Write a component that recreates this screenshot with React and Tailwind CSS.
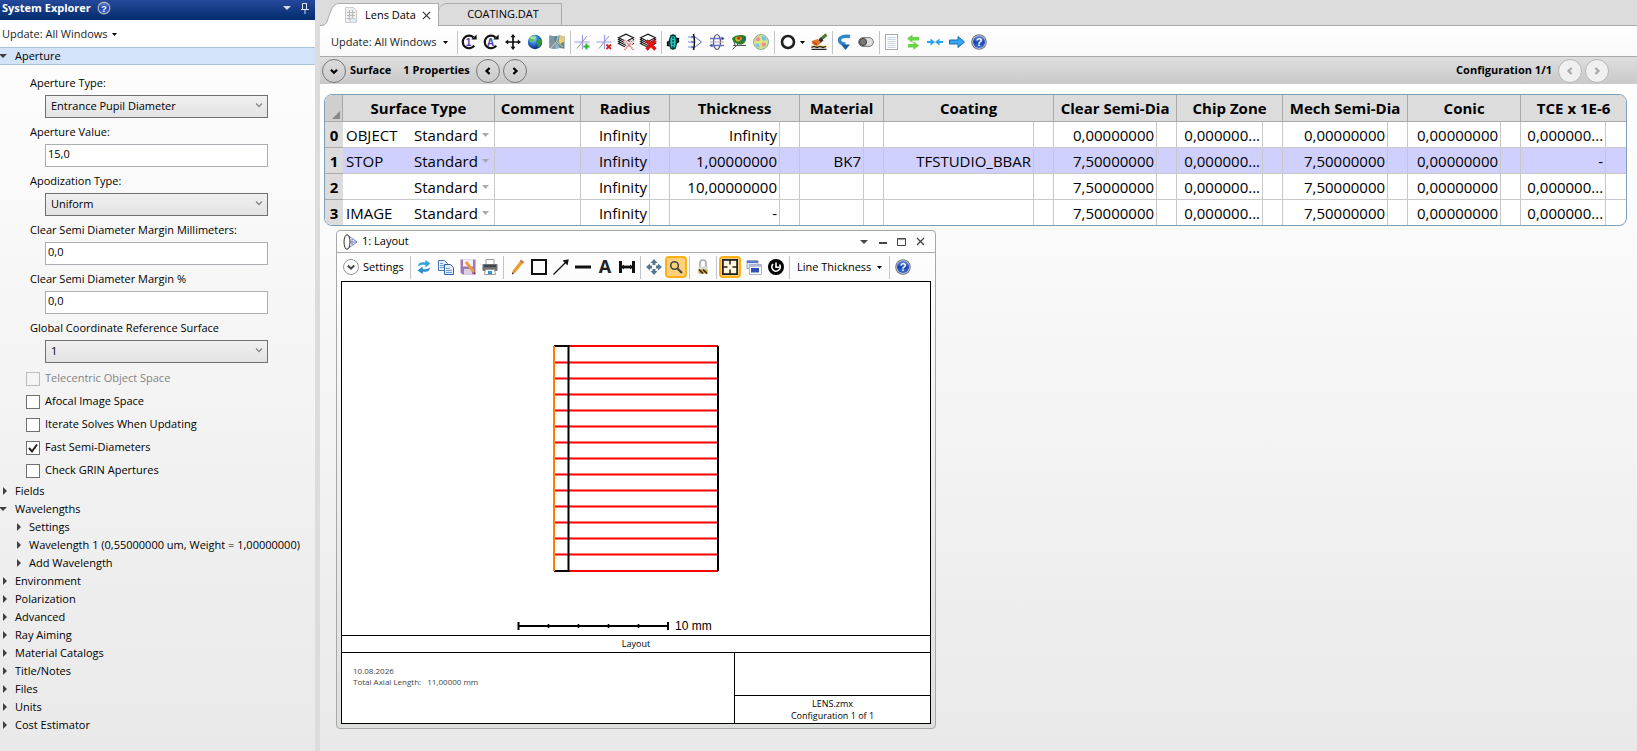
import React, { useState } from 'react';

const surfaces = [
  {
    label: 'OBJECT',
    cells: ['Infinity', 'Infinity', '', '', '0,00000000', '0,000000...', '0,00000000', '0,00000000', '0,000000...'],
  },
  {
    label: 'STOP',
    cells: ['Infinity', '1,00000000', 'BK7', 'TFSTUDIO_BBAR', '7,50000000', '0,000000...', '7,50000000', '0,00000000', '-'],
  },
  {
    label: '',
    cells: ['Infinity', '10,00000000', '', '', '7,50000000', '0,000000...', '7,50000000', '0,00000000', '0,000000...'],
  },
  {
    label: 'IMAGE',
    cells: ['Infinity', '-', '', '', '7,50000000', '0,000000...', '7,50000000', '0,00000000', '0,000000...'],
  },
];

// value column + solve column for every parameter
const columns = [
  { title: 'Radius', width: 'w-[69px]' },
  { title: 'Thickness', width: 'w-[110px]' },
  { title: 'Material', width: 'w-[64px]' },
  { title: 'Coating', width: 'w-[150px]' },
  { title: 'Clear Semi-Dia', width: 'w-[103px]' },
  { title: 'Chip Zone', width: 'w-[86px]' },
  { title: 'Mech Semi-Dia', width: 'w-[105px]' },
  { title: 'Conic', width: 'w-[93px]' },
  { title: 'TCE x 1E-6', width: 'w-[85px]' },
];

const fields = [
  { id: 'apertureType', label: 'Aperture Type:', type: 'select', value: 'Entrance Pupil Diameter' },
  { id: 'apertureValue', label: 'Aperture Value:', type: 'text', value: '15,0' },
  { id: 'apodization', label: 'Apodization Type:', type: 'select', value: 'Uniform' },
  { id: 'marginMm', label: 'Clear Semi Diameter Margin Millimeters:', type: 'text', value: '0,0' },
  { id: 'marginPct', label: 'Clear Semi Diameter Margin %', type: 'text', value: '0,0' },
  { id: 'globalRef', label: 'Global Coordinate Reference Surface', type: 'select', value: '1' },
];

const options = [
  { id: 'telecentric', label: 'Telecentric Object Space', disabled: true },
  { id: 'afocal', label: 'Afocal Image Space' },
  { id: 'iterate', label: 'Iterate Solves When Updating' },
  { id: 'fast', label: 'Fast Semi-Diameters', checked: true },
  { id: 'grin', label: 'Check GRIN Apertures' },
];

const tree = [
  { label: 'Fields' },
  { label: 'Wavelengths', open: true },
  { label: 'Settings', child: true },
  { label: 'Wavelength 1 (0,55000000 um, Weight = 1,00000000)', child: true },
  { label: 'Add Wavelength', child: true },
  { label: 'Environment' },
  { label: 'Polarization' },
  { label: 'Advanced' },
  { label: 'Ray Aiming' },
  { label: 'Material Catalogs' },
  { label: 'Title/Notes' },
  { label: 'Files' },
  { label: 'Units' },
  { label: 'Cost Estimator' },
];

const Icon = ({ children, className = 'w-4 h-4' }) => (
  <svg viewBox="0 0 16 16" className={`${className} shrink-0 overflow-visible`} fill="none">
    {children}
  </svg>
);

const CaretDown = ({ className = 'w-[5px] h-[3px] text-black' }) => (
  <svg viewBox="0 0 8 4" className={`${className} shrink-0`} preserveAspectRatio="none">
    <path d="M0 0h8L4 4z" fill="currentColor" />
  </svg>
);

const HelpIcon = ({ className }) => (
  <Icon className={className}>
    <defs>
      <linearGradient id="helpFill" x1="0" y1="0" x2="0" y2="1">
        <stop offset="0" stopColor="#5f86dd" />
        <stop offset="0.5" stopColor="#1c44ad" />
        <stop offset="1" stopColor="#3d6fd8" />
      </linearGradient>
    </defs>
    <circle cx="8" cy="8" r="7.8" fill="#6f7683" />
    <circle cx="8" cy="8" r="6.8" fill="#c3c9d6" />
    <circle cx="8" cy="8" r="6" fill="url(#helpFill)" />
    <text x="8" y="12" textAnchor="middle" fontSize="11" fontWeight="bold" fill="#fff" fontFamily="Liberation Sans, sans-serif">?</text>
  </Icon>
);

const Rotate = ({ letter }) => (
  <Icon>
    <path d="M13.2 11.6A6.3 6.3 0 1 1 12.4 3.4" stroke="#111" strokeWidth="2.2" />
    <path d="M10.2 5.4h5.4V0.6z" fill="#111" />
    <text x="7.6" y="11.6" textAnchor="middle" fontSize="10" fontWeight="bold" fill="#4343b8" fontFamily="Liberation Sans, sans-serif">{letter}</text>
  </Icon>
);

const Layers = ({ heavy }) => (
  <Icon>
    <g stroke="#111" strokeWidth="1.1" fill="#fff">
      <path d="M.5 9.500l7.500-4 7.500 4-7.500 4z" />
      <path d="M.5 7.500L8 3.500l7.500 4L8 11.500z" />
      <path d="M.5 5.500L8 1.500l7.500 4L8 9.500z" />
      <path d="M.5 3.800L8 .2l7.500 3.600L8 7.500z" />
    </g>
    {heavy ? (
      <path d="M6.500 6.500l9 9M15.500 6.500l-9 9" stroke="#e41212" strokeWidth="3.2" />
    ) : (
      <g>
        <path d="M6.500 6l9 10M15.500 6l-9 10" stroke="#fff" strokeWidth="3.4" />
        <path d="M6.500 6l9 10M15.500 6l-9 10" stroke="#dd7a7a" strokeWidth="2" strokeDasharray="1.2 0.8" />
      </g>
    )}
  </Icon>
);

const Globe = () => (
  <Icon>
    <defs>
      <radialGradient id="globeFill" cx="0.4" cy="0.3" r="0.7">
        <stop offset="0" stopColor="#9ad4ff" />
        <stop offset="0.5" stopColor="#2b74d8" />
        <stop offset="1" stopColor="#0b2a7d" />
      </radialGradient>
    </defs>
    <circle cx="8" cy="8" r="7.2" fill="url(#globeFill)" />
    <path d="M2 4.5C4 1.500 7 1 9 1.600 8 3 8.600 4 7 5.400 5.600 6.600 5.500 8 4 8.400 2.600 8 1.600 6.600 2 4.500z" fill="#5cc04e" />
    <path d="M9.500 6.500c2-1.800 4.500-1.500 5.400-.5.4 3-1 5.600-3 7.200-1.400-.4-1-2.400-1.600-3.500-.8-1-1.800-2-.8-3.200z" fill="#2f9a38" />
    <ellipse cx="6" cy="3.600" rx="3" ry="1.500" fill="#fff" opacity=".45" />
  </Icon>
);

const MapIcon = () => (
  <Icon>
    <path d="M.5 1.500l5 .8 5-.8 5 .8v12.500l-5-.8-5 .8-5-.8z" fill="#5f8799" />
    <path d="M.5 1.500l5 .8v12.500l-5-.8z" fill="#7b95a5" />
    <path d="M10.500 1.500l5 .8v5l-3 2-3-1z" fill="#e3c887" />
    <path d="M6 9l3 1 2 4-2 .3-3.500.5z" fill="#8fb0c4" />
    <path d="M2 14L8 7l1-5M8 8l6 5" stroke="#d8d090" strokeWidth="1" />
    <path d="M10 5l3 1-2 5z" fill="#f6d54b" />
  </Icon>
);

const CrossPlus = ({ remove }) => (
  <Icon>
    <path d="M.5 8h15M8.500 1v14" stroke="#9b9bf0" strokeWidth="1.2" />
    <path d="M3 14.500L13 2" stroke="#999" strokeWidth="1" />
    {remove ? (
      <path d="M10.500 10.500l4.500 4.500M15 10.500l-4.500 4.500" stroke="#d22" strokeWidth="1.800" />
    ) : (
      <path d="M12.500 9.500v6M9.500 12.500h6" stroke="#2fb52f" strokeWidth="2" />
    )}
  </Icon>
);

const MoveCross = () => (
  <Icon>
    <path d="M8 2v12M2 8h12" stroke="#111" strokeWidth="1.700" />
    <path d="M8 0l2.500 3.200h-5zM8 16l2.500-3.200h-5zM0 8l3.200-2.500v5zM16 8l-3.200-2.500v5z" fill="#111" />
  </Icon>
);

const FlipLens = () => (
  <Icon>
    <path d="M6 1.500h4c1.800 4 1.800 9 0 13H6c-1.800-4-1.800-9 0-13z" fill="#1cc7c0" stroke="#053a35" strokeWidth="1.400" />
    <path d="M8 0v16" stroke="#111" strokeDasharray="2 1" />
    <path d="M3.500 11C2 9 2.500 7.500 4.500 7.500M12.500 5c1.500 2 1 3.500-1 3.500" stroke="#111" strokeWidth="1.800" />
    <path d="M11 3.500l3.500.5-1.500 3.500zM5 12.500L1.500 12 3 9z" fill="#111" />
  </Icon>
);

const RayFan = () => (
  <Icon>
    <path d="M1 3h7M1 8h7M1 13h7" stroke="#7a86d6" />
    <path d="M4.500 1.500L6.500 3l-2 1.500zM4.500 6.500l2 1.500-2 1.500zM4.500 11.500l2 1.500-2 1.500z" fill="#5563c4" />
    <path d="M7.500 2.500L14.500 8l-7 5.500" stroke="#5563c4" />
    <path d="M6.500 0c1.200 5 1.200 11 0 16" stroke="#111" strokeWidth="1.500" />
  </Icon>
);

const LensGrid = () => (
  <Icon>
    <ellipse cx="8" cy="8" rx="3.500" ry="7.500" stroke="#556" strokeWidth="1.200" />
    <path d="M1 4.500h14M1 11.500h14" stroke="#6672cc" strokeWidth="1.300" />
    <path d="M1 8h14" stroke="#aab" />
    <path d="M12.500 2.500l3 2-3 2zM3.500 9.500l-3 2 3 2z" fill="#4450a8" />
  </Icon>
);

const SurfacePlot = () => (
  <Icon>
    <path d="M1.500 15.500l6-6M2 11.500h13M2 4l2 7" stroke="#555" />
    <path d="M1 4.500C3 1 11 0 15 2.500c.6 3-.5 6.500-4 8C7 11 2.500 9 1 4.500z" fill="#27802a" />
    <path d="M4.500 3.500c2-1.500 5-1.500 6 0s-1.500 4-3.500 4-3.500-2-2.500-4z" fill="#d8b030" />
    <path d="M6 3.500c1.500-1 3.500-.8 3.500.4S8.500 6 7.500 5.800 5.500 4.500 6 3.500z" fill="#c9301c" />
    <path d="M11 7c1-1.500 2.500-1.500 2.800-3" stroke="#1a5fb0" strokeWidth="1.300" />
  </Icon>
);

const ContourDisc = () => (
  <Icon>
    <circle cx="8" cy="8" r="7.500" fill="#bfe79a" stroke="#8fae98" />
    <path d="M4 3.500c2-1.500 3 0 3 2s-3 2-4 1 0-2 1-3zM9 8.500c2-1 4 0 4 2s-3 3-4 1.500-1-2.500 0-3.500z" fill="#f08f8f" />
    <path d="M9 2c2 0 4 1 4.500 3S10 7 9 5.500 8 3 9 2zM3 10c1.500-.6 3 0 3.500 1.500S5 14 4 13s-2-2-1-3z" fill="#7fbfea" />
    <path d="M1 8h14M8 1v14" stroke="#f2e36a" />
  </Icon>
);

const Brush = () => (
  <Icon>
    <path d="M15.500.5L9 6" stroke="#4a7a35" strokeWidth="3" />
    <path d="M10 3.500L7 6.500l2.500 2.500 3-2.500z" fill="#333" />
    <path d="M7 5L.5 7l1 3 4.500 2 4-3z" fill="#e0762b" />
    <path d="M2 8l4 2M3 10l3 1" stroke="#a33c0d" strokeWidth=".8" />
    <path d="M.5 12.500h15" stroke="#e8a220" strokeWidth="1.600" />
    <path d="M.5 13.500l2.500-1 3 1 3-1 3 1 3-1M.5 15.300h15" stroke="#222" strokeWidth="1.300" />
  </Icon>
);

const Undo = () => (
  <Icon>
    <path d="M14 2.500C7 1.500 3 3.500 3.500 6.500c.3 2 2.500 3.500 6 3.800" stroke="#2f86c8" strokeWidth="3.400" />
    <path d="M5 10.500h9L9.500 16z" fill="#1d5f9c" />
  </Icon>
);

const Toggle = () => (
  <Icon>
    <rect x=".6" y="3.600" width="14.800" height="8.800" rx="4.400" fill="#ddd" stroke="#777" />
    <circle cx="5" cy="8" r="3.600" fill="#777" stroke="#444" />
  </Icon>
);

const Sheet = () => (
  <Icon>
    <rect x="2.500" y=".5" width="12" height="15" fill="#fff" stroke="#aaa" />
    <path d="M4.500 3.500h8M4.500 5.500h8M4.500 7.500h8M4.500 9.500h8M4.500 11.500h8M4.500 13.500h8" stroke="#c4d2e4" />
  </Icon>
);

const SwapGreen = () => (
  <Icon>
    <path d="M2 4.500L7.500.5V3H14v3.500H7.500V9z" fill="#6bd34a" />
    <path d="M14 11.500L8.500 7.500V10H3v3.500h5.500V16z" fill="#6bd34a" />
  </Icon>
);

const Converge = () => (
  <Icon>
    <path d="M0 7h3.500V4.500L8 8l-4.500 3.500V9H0zM16 7h-3.500V4.500L8 8l4.500 3.500V9H16z" fill="#2aa3f0" />
  </Icon>
);

const ArrowBlue = () => (
  <Icon>
    <path d="M.5 6h8.500V2.500L15.500 8 9 13.500V10H.5z" fill="#35a7f0" stroke="#1a6cb0" />
  </Icon>
);

const toolGroups = [
  [<Rotate letter="1" />, <Rotate letter="A" />, <MoveCross />, <Globe />, <MapIcon />],
  [<CrossPlus />, <CrossPlus remove />, <Layers />, <Layers heavy />],
  [<FlipLens />, <RayFan />, <LensGrid />, <SurfacePlot />, <ContourDisc />],
];

const Separator = ({ className = 'ml-0.5' }) => (
  <span className={`${className} w-px h-[23px] bg-[#c4c4c4] shrink-0`}></span>
);

const ToolButton = ({ children, active, label }) => (
  <button
    aria-label={label}
    className={
      active
        ? 'w-[22px] h-[22px] flex items-center justify-center shrink-0 rounded-sm border-2 border-[#fbb018] bg-[#fdd17b]'
        : 'w-[22px] h-[22px] flex items-center justify-center shrink-0'
    }
  >
    {children}
  </button>
);

const CircleButton = ({ direction, disabled, label }) => {
  const paths = {
    down: 'M4.500 6.500L8 10l3.500-3.500',
    left: 'M9.800 4.500L6.300 8l3.500 3.500',
    right: 'M6.200 4.500L9.700 8l-3.500 3.500',
  };
  return (
    <button
      aria-label={label}
      disabled={disabled}
      className={
        disabled
          ? 'w-6 h-6 rounded-full border border-[#b5b5b5] bg-[#f0f0f0] text-[#aaa] flex items-center justify-center shrink-0'
          : 'w-6 h-6 rounded-full border border-[#777] text-black flex items-center justify-center shrink-0'
      }
    >
      <Icon className="w-[14px] h-[14px]">
        <path d={paths[direction]} stroke="currentColor" strokeWidth="2.600" />
      </Icon>
    </button>
  );
};

const Field = ({ field }) => (
  <div className="mb-0.5 pl-[30px]">
    <label htmlFor={field.id} className="flex h-6 items-center">{field.label}</label>
    <div className="relative ml-[15px] w-[223px]">
      {field.type === 'select' ? (
        <>
          <select
            id={field.id}
            className="block h-[23px] w-full appearance-none border border-[#707070] bg-gradient-to-b from-[#f0f0f0] to-[#e3e3e3] pl-[5px]"
          >
            <option>{field.value}</option>
          </select>
          <svg viewBox="0 0 8 5" className="pointer-events-none absolute right-[5px] top-2 h-[5px] w-2" fill="none">
            <path d="M1 .5l3 3 3-3" stroke="#888" strokeWidth="1.300" />
          </svg>
        </>
      ) : (
        <input
          id={field.id}
          type="text"
          defaultValue={field.value}
          className="block h-[23px] w-full border border-[#abadb3] bg-white px-0.5 pb-1"
        />
      )}
    </div>
  </div>
);

const Option = ({ option }) => (
  <div className="flex h-[23px] items-center pl-[26px]">
    <span className="relative flex">
      <input
        id={option.id}
        type="checkbox"
        defaultChecked={option.checked}
        disabled={option.disabled}
        className="peer block h-[14px] w-[14px] appearance-none border border-[#707070] bg-white disabled:border-[#bcbcbc] disabled:bg-[#f4f4f4]"
      />
      <svg viewBox="0 0 14 14" className="pointer-events-none absolute inset-0 hidden h-[14px] w-[14px] peer-checked:block" fill="none">
        <path d="M3 7l3 3.500L11 3.500" stroke="#212121" strokeWidth="2" />
      </svg>
    </span>
    <label htmlFor={option.id} className={option.disabled ? 'pl-[5px] text-[#838383]' : 'pl-[5px]'}>
      {option.label}
    </label>
  </div>
);

const TreeArrow = ({ open }) =>
  open ? (
    <CaretDown className="w-2 h-1 text-[#404040]" />
  ) : (
    <svg viewBox="0 0 4 8" className="h-2 w-1 shrink-0">
      <path d="M0 0l4 4-4 4z" fill="#404040" />
    </svg>
  );

const SystemExplorer = () => (
  <aside className="flex w-[315px] shrink-0 flex-col bg-gradient-to-b from-white to-[#e9e9e9] text-[11px]">
    <header className="flex h-5 items-center bg-gradient-to-b from-[#24499c] to-[#032c6c] pb-1 pl-0.5 pr-1.5 text-white">
      <h1 className="font-bold">System Explorer</h1>
      <button aria-label="Help" className="ml-1.5"><HelpIcon className="w-[14px] h-[14px]" /></button>
      <button aria-label="Panel menu" className="ml-auto"><CaretDown className="w-2 h-1 text-[#d5dcea]" /></button>
      <button aria-label="Pin" className="ml-[10px]">
        <svg viewBox="0 0 8 11" className="h-[11px] w-2" fill="none">
          <path d="M1.500 6.500v-6h4v6M0 6.500h8M5.500.5v6M4 7v4" stroke="#dfe5f2" />
        </svg>
      </button>
    </header>
    <button className="flex h-[27px] items-center gap-1 bg-white pl-0.5 pt-0.5 text-[#1e1e1e]">
      Update: All Windows <CaretDown />
    </button>
    <button className="flex h-[18px] items-center border-y border-[#a9c6dd] bg-[#d3e3f9] text-left">
      <span className="-ml-px flex w-4"><TreeArrow open /></span>
      Aperture
    </button>
    <div className="pt-1.5">
      {fields.map((field) => (
        <Field key={field.id} field={field} />
      ))}
    </div>
    <div className="pt-0.5">
      {options.map((option) => (
        <Option key={option.id} option={option} />
      ))}
    </div>
    <ul>
      {tree.map((item) => (
        <li key={item.label}>
          <button className={item.child ? 'flex h-[18px] items-center whitespace-nowrap pl-[17px]' : 'flex h-[18px] items-center pl-[3px]'}>
            <span className={item.open ? 'flex w-3 -ml-1 mr-1' : 'flex w-3'}><TreeArrow open={item.open} /></span>
            {item.label}
          </button>
        </li>
      ))}
    </ul>
  </aside>
);

const Tabs = () => (
  <div className="flex h-[26px] items-end border-b border-[#aaa] bg-[#dcdcdc] text-[11px]" role="tablist">
    <svg viewBox="0 0 20 23" className="-mb-px h-[23px] w-5 shrink-0" fill="none">
      <path d="M0 23C8 23 7 17 10 10 13 3 14 .5 20 .5V23z" fill="#fff" />
      <path d="M0 22.500C8 22.500 7 17 10 10 13 3 14 .5 20 .5" stroke="#aaa" />
    </svg>
    <div role="tab" aria-selected="true" className="-mb-px flex h-[23px] w-[99px] items-center border-r border-t border-[#aaa] bg-white pl-1">
      <svg viewBox="0 0 14 16" className="mr-[7px] h-4 w-[14px] shrink-0" fill="none">
        <path d="M1.500.5h8l3 3v12h-11z" fill="#eee" stroke="#ccc" />
        <path d="M3 5.500h8M3 8.500h8M3 11.500h8M5.500 3v11M8.500 3v11" stroke="#bbb" />
        <ellipse cx="9" cy="13.500" rx="3.500" ry="2" fill="#e3eef8" stroke="#bccbd8" strokeWidth=".7" />
      </svg>
      Lens Data
      <button aria-label="Close tab" className="ml-1.5">
        <svg viewBox="0 0 10 10" className="h-[9px] w-[9px]"><path d="M1 1l8 8M9 1l-8 8" stroke="#333" strokeWidth="1.300" /></svg>
      </button>
    </div>
    <div role="tab" aria-selected="false" className="flex h-[22px] w-[123px] items-center justify-center rounded-tl-lg border-r border-t border-[#aaa] pl-1.5">
      COATING.DAT
    </div>
  </div>
);

const Toolbar = () => (
  <div className="flex h-[31px] items-center border-b border-[#aaa] bg-gradient-to-b from-white to-[#fafafa] pl-[11px] pt-0.5 text-[11px] text-[#1e1e1e]">
    <button className="flex w-[124px] items-center gap-1.5 whitespace-nowrap">
      Update: All Windows <CaretDown />
    </button>
    {toolGroups.map((group, i) => (
      <div key={i} className="flex items-center">
        <Separator />
        {group.map((icon, j) => (
          <ToolButton key={j} label={`Tool ${i + 1}.${j + 1}`}>{icon}</ToolButton>
        ))}
      </div>
    ))}
    <Separator />
    <button aria-label="Aperture" className="flex w-[33px] items-center gap-1 pl-[5px]">
      <Icon><circle cx="8" cy="8" r="6" stroke="#1e1e1e" strokeWidth="2.600" /></Icon>
      <CaretDown />
    </button>
    <ToolButton label="Coating"><Brush /></ToolButton>
    <Separator />
    <ToolButton label="Undo"><Undo /></ToolButton>
    <ToolButton label="Toggle"><Toggle /></ToolButton>
    <Separator />
    <ToolButton label="Sheet"><Sheet /></ToolButton>
    <ToolButton label="Swap"><SwapGreen /></ToolButton>
    <ToolButton label="Converge"><Converge /></ToolButton>
    <ToolButton label="Go to"><ArrowBlue /></ToolButton>
    <ToolButton label="Help"><HelpIcon /></ToolButton>
  </div>
);

const SurfaceBar = () => (
  <div className="flex h-[27px] items-center bg-gradient-to-b from-[#dedede] to-[#c9c9c9] pl-0.5 pr-7 text-[11px] font-bold">
    <CircleButton direction="down" label="Expand" />
    <span className="pl-1">Surface</span>
    <span className="pl-3 pr-1.5">1 Properties</span>
    <CircleButton direction="left" label="Previous surface" />
    <span className="w-[3px]"></span>
    <CircleButton direction="right" label="Next surface" />
    <span className="ml-auto pr-1.5">Configuration 1/1</span>
    <CircleButton direction="left" label="Previous configuration" disabled />
    <span className="w-[3px]"></span>
    <CircleButton direction="right" label="Next configuration" disabled />
  </div>
);

const LensTable = () => {
  const [selected, setSelected] = useState(1);
  return (
    <div className="ml-1 mr-[10px] mt-[10px] overflow-hidden rounded-lg border border-[#7f9db5] bg-white">
      <table className="w-full table-fixed border-separate border-spacing-0 text-[15px] leading-5">
        <colgroup>
          <col className="w-[18px]" />
          <col className="w-[152px]" />
          <col className="w-[86px]" />
          {columns.map((col) => (
            <React.Fragment key={col.title}>
              <col className={col.width} />
              <col className="w-5" />
            </React.Fragment>
          ))}
        </colgroup>
        <thead>
          <tr className="h-[27px] bg-[#dcdcdc]">
            <th className="border-b border-r border-[#aaa] bg-[#cfcfcf] p-0 align-bottom">
              <svg viewBox="0 0 8 8" className="mb-0.5 ml-auto mr-0.5 h-2 w-2"><path d="M8 0v8H0z" fill="#888" /></svg>
            </th>
            <th className="border-b border-r border-[#aaa] p-0">Surface Type</th>
            <th className="border-b border-r border-[#aaa] p-0">Comment</th>
            {columns.map((col) => (
              <th key={col.title} colSpan={2} className="whitespace-nowrap border-b border-r border-[#aaa] p-0 last:border-r-0">
                {col.title}
              </th>
            ))}
          </tr>
        </thead>
        <tbody>
          {surfaces.map((surface, row) => (
            <tr
              key={row}
              onClick={() => setSelected(row)}
              className={row === selected ? 'group h-[26px] bg-[#d0d0ff] last:h-[25px]' : 'group h-[26px] last:h-[25px]'}
            >
              <th className="border-b border-[#aaa] bg-[#dcdcdc] p-0 group-last:border-b-0">{row}</th>
              <td className="border-b border-r border-[#c8c8c8] p-0 group-last:border-b-0">
                <div className="flex items-center justify-between pl-[3px] pr-[5px]">
                  <span>{surface.label}</span>
                  <span className="flex items-center gap-1">
                    <select aria-label={`Surface ${row} type`} className="appearance-none bg-transparent">
                      <option>Standard</option>
                    </select>
                    <CaretDown className="w-[7px] h-1 text-[#aaa]" />
                  </span>
                </div>
              </td>
              <td className="border-b border-r border-[#c8c8c8] p-0 group-last:border-b-0"></td>
              {surface.cells.map((cell, i) => (
                <React.Fragment key={i}>
                  <td className="whitespace-nowrap border-b border-r border-[#c8c8c8] p-0 pr-0.5 text-right group-last:border-b-0">{cell}</td>
                  <td className="border-b border-r border-[#c8c8c8] p-0 last:border-r-0 group-last:border-b-0"></td>
                </React.Fragment>
              ))}
            </tr>
          ))}
        </tbody>
      </table>
    </div>
  );
};

const rayHeights = [362.5, 378.5, 394.5, 410.5, 426.5, 442.5, 458.5, 474.5, 490.5, 506.5, 522.5, 538.5, 554.5];

const LensDrawing = () => (
  <svg viewBox="342 282 588 353" className="block w-full" fill="none">
    {rayHeights.map((y) => (
      <path key={y} d={`M554 ${y}H718`} stroke="#f00" strokeWidth="2" />
    ))}
    <path d="M569 346H718M569 571H718" stroke="#f00" strokeWidth="2" />
    <path d="M554 346H569M554 571H569M568.5 345V572M718 346V571" stroke="#000" strokeWidth="2" />
    <path d="M554 346V571" stroke="#ff8000" strokeWidth="2" />
    <path d="M518 626H668" stroke="#000" strokeWidth="2" />
    <path d="M518.5 622V630M668 622V630" stroke="#000" strokeWidth="2" />
    <path d="M548.500 624V628M578.500 624V628M608.500 624V628M638.500 624V628" stroke="#000" strokeWidth="1.600" />
    <text x="675" y="630" fontSize="12" fill="#000" fontFamily="Liberation Sans, sans-serif">10 mm</text>
  </svg>
);

const layoutTools = [
  [
    <Icon><path d="M2 7.500C2 4 5 2.500 9 3.500L9.500 1l5 3.500-5 4L9.300 6C6 5.500 4 6 2 7.500z" fill="#36a3e0" /><path d="M14 8.500c0 3.500-3 5-7 4L6.500 15l-5-3.500 5-4 .2 2.500c3.300.5 5.300 0 7.300-1.500z" fill="#2b8fd0" /></Icon>,
    <Icon><path d="M.5 1.500h6l3 3v7h-9z" fill="#e4eefb" stroke="#4a78b8" /><path d="M6.500 5.500h6l3 3v7h-9z" fill="#e4eefb" stroke="#2f62ac" /><path d="M8 9.500h4M8 11.500h6M8 13.500h6M2 4.500h3M2 6.500h4M2 8.500h4" stroke="#6f9bd6" /></Icon>,
    <Icon><path d="M.5.5h15v15h-13l-2-2z" fill="#9a7bb5" /><path d="M3 .5h10v7H3z" fill="#f3eef8" /><path d="M4 10h8v5.500H4z" fill="#d9d0e4" /><path d="M7 2l7 9 .5 3-3-1.500L5 4z" fill="#eb9c33" /><path d="M13 14.500l2.500 1-.5-3z" fill="#a33" /></Icon>,
    <Icon><path d="M4 .5h8v6H4z" fill="#fff" stroke="#999" /><rect x=".5" y="5" width="15" height="7" rx="1" fill="#6b6f76" /><path d="M2 7h12" stroke="#33373d" strokeWidth="1.500" /><path d="M3.500 10.500h9l1 5h-11z" fill="#fff" stroke="#999" /><path d="M6 12h4v3H6z" fill="#3a8fd0" /></Icon>,
  ],
  [
    <Icon><path d="M12 .8l3 2.200-8.500 10.500-3.500 2 .7-4z" fill="#f0a93b" /><path d="M12 .8l3 2.200-1.200 1.500-3-2.200z" fill="#d46a5a" /><path d="M3.400 13.200L3 15.500l2-1.200z" fill="#222" /><path d="M12.500 3.500L5 13" stroke="#c97f17" strokeWidth=".8" /></Icon>,
    <Icon><rect x="1" y="1" width="14" height="14" stroke="#111" strokeWidth="2" /></Icon>,
    <Icon><path d="M.5 15.500L13 3" stroke="#111" strokeWidth="1.200" /><path d="M15.800.2L14.500 6.500 9.500 1.500z" fill="#111" /></Icon>,
    <Icon><path d="M0 8h16" stroke="#111" strokeWidth="3" /></Icon>,
    <Icon><text x="8" y="14" textAnchor="middle" fontSize="18" fontWeight="bold" fill="#222" fontFamily="Open Sans, sans-serif">A</text></Icon>,
    <Icon><path d="M1.500 2v12M14.500 2v12" stroke="#111" strokeWidth="3" /><path d="M1 8h14" stroke="#111" strokeWidth="2.800" /><path d="M5 5.500L2.500 8 5 10.500zM11 5.500L13.500 8 11 10.500z" fill="#111" /></Icon>,
  ],
];

const LayoutWindow = () => (
  <section className="ml-4 mt-1 w-[600px] rounded-sm border border-[#a8a8a8] bg-gradient-to-b from-white to-[#dcdfdb] text-[11px]">
    <header className="flex h-[22px] items-center border-b border-[#aaa] pl-1.5 pr-[10px]">
      <svg viewBox="0 0 15 16" className="mr-1 h-4 w-[15px]" fill="none">
        <path d="M5 1.500L14 8l-9 6.500M2 8h12M9 5v6" stroke="#6f7fc9" />
        <ellipse cx="4" cy="8" rx="3" ry="7.300" fill="#fff" stroke="#333" />
      </svg>
      <h2>1: Layout</h2>
      <div className="ml-auto flex items-center gap-[10px] text-[#444]">
        <button aria-label="Window menu"><CaretDown className="w-2 h-1" /></button>
        <button aria-label="Minimize"><svg viewBox="0 0 9 9" className="h-[9px] w-[9px]"><path d="M1 6h8" stroke="#444" strokeWidth="2" /></svg></button>
        <button aria-label="Maximize"><svg viewBox="0 0 9 9" className="h-[9px] w-[9px]" fill="none"><path d="M.5 1.500h8v7h-8zM.5 2h8" stroke="#444" /></svg></button>
        <button aria-label="Close"><svg viewBox="0 0 9 9" className="h-[9px] w-[9px]"><path d="M1 1l7 7M8 1l-7 7" stroke="#444" strokeWidth="1.300" /></svg></button>
      </div>
    </header>
    <div className="flex h-7 items-center pl-1.5">
      <button className="flex w-[67px] items-center gap-1">
        <Icon><circle cx="8" cy="8" r="7.500" stroke="#999" /><path d="M4.800 6.500L8 9.700l3.200-3.200" stroke="#444" strokeWidth="2" /></Icon>
        Settings
      </button>
      {layoutTools.map((group, i) => (
        <div key={i} className="flex items-center">
          <Separator className="ml-0 mr-0.5" />
          {group.map((icon, j) => (
            <ToolButton key={j} label={`Layout tool ${i + 1}.${j + 1}`}>{icon}</ToolButton>
          ))}
          <span className="w-0.5"></span>
        </div>
      ))}
      <Separator className="mr-0.5" />
      <ToolButton label="Pan">
        <Icon><path d="M8 0l3.500 4H9.500V6H6.500V4H4.500zM8 16l3.500-4H9.500V10H6.500v2H4.500zM0 8l4-3.500V6.500h2v3H4v2zM16 8l-4-3.500V6.500h-2v3h2v2z" fill="#58788f" /></Icon>
      </ToolButton>
      <ToolButton label="Zoom" active>
        <Icon><circle cx="6.500" cy="6.500" r="3.800" stroke="#444" strokeWidth="1.600" /><path d="M9.500 9.500l4.500 4.500" stroke="#444" strokeWidth="2.200" /></Icon>
      </ToolButton>
      <Separator className="mx-0.5" />
      <ToolButton label="Lock">
        <Icon><path d="M5 8V4a3 3 0 0 1 6 0V8" stroke="#aaa" strokeWidth="1.600" /><path d="M3.500 7.500h9v7h-9z" fill="#d9d9d9" /><path d="M3.500 10.500h9v4h-9z" fill="#d9a829" /><path d="M4 10.500l4 4M8 10.500l4 4" stroke="#222" strokeWidth="1.500" /></Icon>
      </ToolButton>
      <Separator className="mx-0.5" />
      <ToolButton label="Fit window" active>
        <Icon><rect x=".9" y=".9" width="14.200" height="14.200" fill="#fff4dc" stroke="#222" strokeWidth="1.800" /><path d="M8 1v4.500M8 15v-4.500M1 8h4.500M15 8h-4.500" stroke="#222" strokeWidth="1.500" /></Icon>
      </ToolButton>
      <span className="w-0.5"></span>
      <ToolButton label="Copy window">
        <Icon><path d="M1 1.500h11v8H1z" fill="#dfe6f4" stroke="#9aa6bf" /><path d="M1 3h11" stroke="#5a76c8" strokeWidth="2" /><path d="M3.500 5.500h12v10h-12z" fill="#fff" stroke="#a9b2c6" /><path d="M4 7h11" stroke="#b4bfd8" strokeWidth="2" /><path d="M5 9h8v4.500H5z" fill="#2e4fb5" /></Icon>
      </ToolButton>
      <ToolButton label="Reset">
        <Icon><circle cx="8" cy="8" r="8" fill="#000" /><path d="M5 5a4.200 4.200 0 1 0 6.500.5" stroke="#fff" strokeWidth="1.700" /><path d="M8 3.500v4.800h3.500" stroke="#fff" strokeWidth="1.600" /></Icon>
      </ToolButton>
      <Separator className="ml-0.5 mr-[7px]" />
      <button className="flex w-[92px] items-center gap-1.5 whitespace-nowrap">
        Line Thickness <CaretDown />
      </button>
      <Separator className="mr-0.5" />
      <ToolButton label="Help"><HelpIcon /></ToolButton>
    </div>
    <div className="mx-1 mb-1 border border-black bg-white text-[9px] leading-3">
      <LensDrawing />
      <div className="border-y border-black text-center leading-4">Layout</div>
      <div className="flex h-[70px]">
        <div className="flex-1 pl-[11px] pt-3 text-[8px] leading-[11px] text-[#444]">
          <p>10.08.2026</p>
          <p>Total Axial Length: <span className="pl-1">11,00000 mm</span></p>
        </div>
        <div className="flex w-1/3 flex-col border-l border-black text-center">
          <div className="flex-1 border-b border-black"></div>
          <div className="h-[27px] pt-0.5">
            <p>LENS.zmx</p>
            <p>Configuration 1 of 1</p>
          </div>
        </div>
      </div>
    </div>
  </section>
);

const App = () => {
  return (
    <div className="flex min-h-screen font-['Open_Sans','Noto_Sans',sans-serif] text-black">
      <SystemExplorer />
      <main className="flex min-w-0 flex-1 flex-col border-l-[5px] border-[#dcdcdc]">
        <Tabs />
        <Toolbar />
        <SurfaceBar />
        <div className="flex-1 bg-gradient-to-b from-white to-[#e9e9e9]">
          <div className="flow-root">
            <LensTable />
            <LayoutWindow />
          </div>
        </div>
      </main>
    </div>
  );
};

export default App;
